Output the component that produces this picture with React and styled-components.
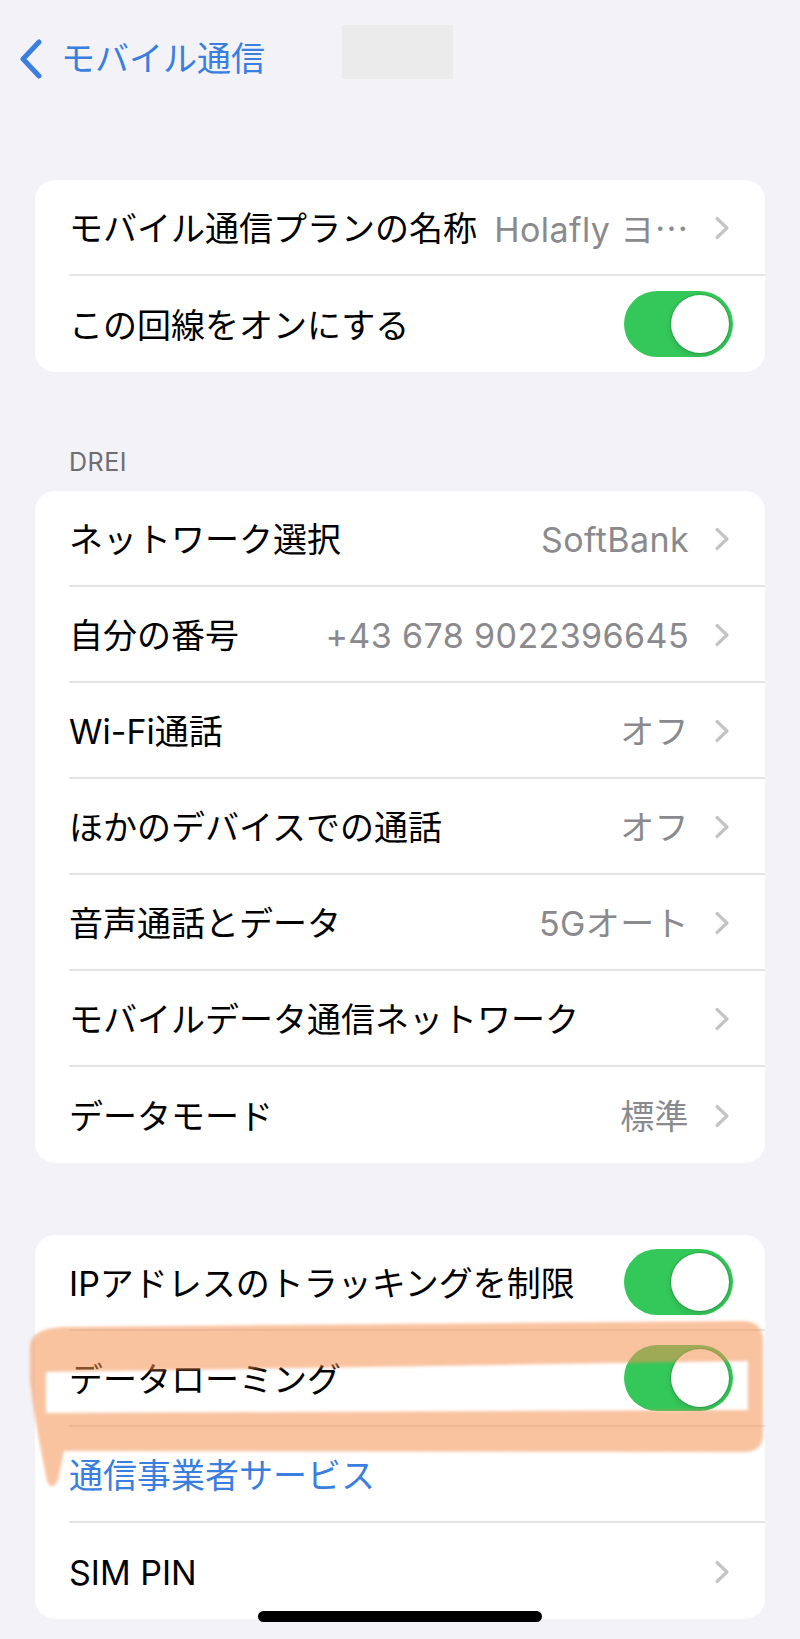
import styled, { createGlobalStyle } from "styled-components";

const FONT = `Inter, "Noto Sans CJK JP", sans-serif`;

const GlobalStyle = createGlobalStyle`
  html, body {
    margin: 0;
    padding: 0;
    background: #f2f2f7;
  }
  body {
    font-family: ${FONT};
    -webkit-font-smoothing: antialiased;
  }
`;

const basicRows = [
  { label: "ネットワーク選択", value: "SoftBank", chevron: true },
  { label: "自分の番号", value: "+43 678 9022396645", chevron: true },
  { label: "Wi-Fi通話", value: "オフ", chevron: true },
  { label: "ほかのデバイスでの通話", value: "オフ", chevron: true },
  { label: "音声通話とデータ", value: "5Gオート", chevron: true },
  { label: "モバイルデータ通信ネットワーク", chevron: true },
  { label: "データモード", value: "標準", chevron: true },
];

export default function App() {
  return (
    <>
      <GlobalStyle />
      <Page>
        <NavBar>
          <BackButton>
            <svg width="24" height="40" viewBox="0 0 24 40">
              <path
                d="M20 3 L4 20 L20 37"
                fill="none"
                stroke="#3a7ee0"
                strokeWidth="5"
                strokeLinecap="round"
                strokeLinejoin="round"
              />
            </svg>
            <BackLabel>モバイル通信</BackLabel>
          </BackButton>
          <Redacted />
        </NavBar>

        <Card $top={64}>
          <Row>
            <RowInner>
              <Label>モバイル通信プランの名称</Label>
              <Value>
                Holafly ヨ<Ellipsis>…</Ellipsis>
              </Value>
              <Chevron />
            </RowInner>
          </Row>
          <Row>
            <RowInner $last>
              <Label>この回線をオンにする</Label>
              <Toggle />
            </RowInner>
          </Row>
        </Card>

        <SectionHeader>DREI</SectionHeader>
        <Card $top={0}>
          {basicRows.map((row, i) => (
            <Row key={row.label}>
              <RowInner $last={i === basicRows.length - 1}>
                <Label>{row.label}</Label>
                {row.value ? <Value>{row.value}</Value> : null}
                {row.chevron ? <Chevron /> : null}
              </RowInner>
            </Row>
          ))}
        </Card>

        <Card $top={72}>
          <Row>
            <RowInner>
              <Label>IPアドレスのトラッキングを制限</Label>
              <Toggle />
            </RowInner>
          </Row>
          <Row>
            <RowInner>
              <Label>データローミング</Label>
              <Toggle />
            </RowInner>
          </Row>
          <Row>
            <RowInner>
              <Label $link>通信事業者サービス</Label>
            </RowInner>
          </Row>
          <Row>
            <RowInner $last>
              <Label>SIM PIN</Label>
              <Chevron />
            </RowInner>
          </Row>
        </Card>

        <Highlight />
        <HomeIndicator />
      </Page>
    </>
  );
}

function Chevron() {
  return (
    <ChevronIcon width="16" height="24" viewBox="0 0 16 24">
      <path
        d="M3 2.5 L13 12 L3 21.5"
        fill="none"
        stroke="#c4c4c7"
        strokeWidth="3.2"
        strokeLinecap="round"
        strokeLinejoin="round"
      />
    </ChevronIcon>
  );
}

function Toggle() {
  return (
    <Track>
      <Knob />
    </Track>
  );
}

// hand-drawn marker stroke around the data roaming row
function Highlight() {
  return (
    <Marker width="800" height="1639" viewBox="0 0 800 1639">
      <defs>
        <filter id="soft" x="-5%" y="-5%" width="110%" height="110%">
          <feGaussianBlur stdDeviation="1.6" />
        </filter>
      </defs>
      <path
        filter="url(#soft)"
        fillRule="evenodd"
        fill="rgb(244,146,82)"
        fillOpacity="0.55"
        d="M30 1346 Q31 1329 62 1327 L742 1321 Q763 1321 763 1341 L763 1434
           Q763 1452 744 1452 L64 1451 Q60 1470 58 1480 Q52 1492 47 1481
           L39 1440 Q33 1410 30 1380 Z
           M46 1372 L748 1361 L748 1410 L46 1413 Z"
      />
    </Marker>
  );
}

const Page = styled.div`
  position: relative;
  width: 800px;
  min-height: 1639px;
  overflow: hidden;
  background: #f2f2f7;
`;

const NavBar = styled.header`
  height: 116px;
  display: flex;
  align-items: center;
  padding-left: 19px;
`;

const BackButton = styled.div`
  display: flex;
  align-items: center;
  gap: 18px;
  margin-top: 2px;
`;

const BackLabel = styled.span`
  font-size: 34px;
  color: #3a7ee0;
  line-height: 40px;
`;

const Redacted = styled.div`
  align-self: flex-start;
  margin-top: 25px;
  margin-left: 77px;
  width: 111px;
  height: 54px;
  background: #ebebec;
`;

const Card = styled.section`
  margin: ${({ $top }) => $top}px 35px 0;
  background: #ffffff;
  border-radius: 20px;
  overflow: hidden;
`;

const SectionHeader = styled.h2`
  margin: 75px 0 14px;
  padding-left: 69px;
  font-size: 25px;
  line-height: 30px;
  font-weight: 400;
  color: #6d6d72;
  letter-spacing: 0.5px;
`;

const Row = styled.div`
  padding-left: 34px;
`;

const RowInner = styled.div`
  box-sizing: border-box;
  height: 96px;
  display: flex;
  align-items: center;
  padding-right: 34px;
  border-bottom: ${({ $last }) => ($last ? "none" : "2px solid #e4e4e7")};
`;

const Label = styled.span`
  flex: 1;
  font-size: 34px;
  line-height: 40px;
  padding-top: 3px;
  color: ${({ $link }) => ($link ? "#3a7ee0" : "#000000")};
  white-space: nowrap;
`;

const Value = styled.span`
  font-size: 34px;
  line-height: 40px;
  padding-top: 3px;
  color: #8a8a8e;
  white-space: nowrap;
  letter-spacing: 0.4px;
  margin-right: 25px;
`;

const Ellipsis = styled.span`
  font-family: "Noto Sans CJK JP", sans-serif;
`;

const ChevronIcon = styled.svg`
  flex-shrink: 0;
  display: block;
  margin-right: 1px;
  margin-top: 2px;
`;

const Track = styled.div`
  flex-shrink: 0;
  width: 109px;
  height: 66px;
  margin-right: -2px;
  border-radius: 33px;
  background: #34c759;
  display: flex;
  align-items: center;
  justify-content: flex-end;
  padding: 0 4px;
  box-sizing: border-box;
`;

const Knob = styled.div`
  width: 58px;
  height: 58px;
  border-radius: 50%;
  background: #ffffff;
  box-shadow: 0 0 0 1px rgba(30, 120, 50, 0.35), 0 3px 6px rgba(0, 0, 0, 0.12);
`;

const Marker = styled.svg`
  position: absolute;
  top: 0;
  left: 0;
  pointer-events: none;
`;

const HomeIndicator = styled.div`
  position: absolute;
  left: 258px;
  top: 1611px;
  width: 284px;
  height: 11px;
  border-radius: 6px;
  background: #000000;
`;
